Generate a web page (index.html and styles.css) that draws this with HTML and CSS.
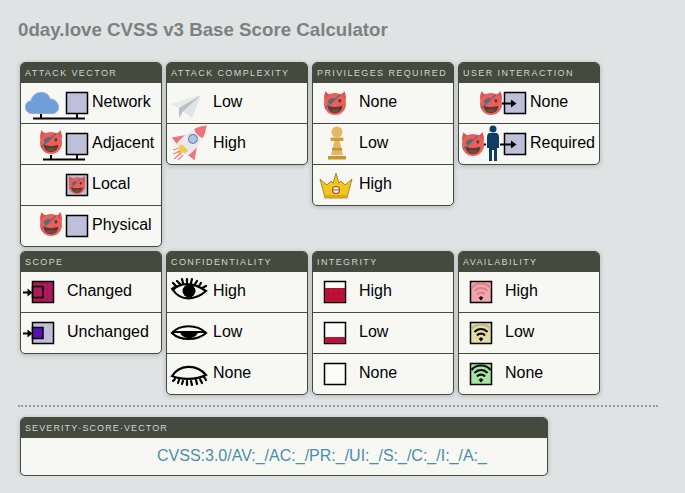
FILE: index.html
```html
<!DOCTYPE html>
<html lang="en">
<head>
<meta charset="utf-8">
<title>0day.love CVSS v3 Base Score Calculator</title>
<link rel="stylesheet" href="styles.css">
</head>
<body>
<svg class="defs" aria-hidden="true">
  <defs>
    <pattern id="dots" width="5" height="5" patternUnits="userSpaceOnUse">
      <circle cx="2" cy="2" r="0.700" fill="#5a0a30" opacity="0.6"/>
    </pattern>
    <symbol id="devil" viewBox="0 0 36 39">
      <path d="M1 17 C-1 9 1 4 3 0 C4 4 8 6 13 5Z M35 17 C37 9 35 4 33 0 C32 4 28 6 23 5Z" fill="#e0504e"/>
      <circle cx="18" cy="21" r="18" fill="#ea5f5c"/>
      <path d="M6 24 C6 24 12 26 18 26 C24 26 30 24 30 24 C30 31 24.500 36 18 36 C11.500 36 6 31 6 24Z" fill="#5e3a30"/>
      <path d="M10 31.500 C14 29 22 29 26 31.500 C23 35.500 13 35.500 10 31.500Z" fill="#7a4a3c"/>
      <ellipse cx="26" cy="16" rx="2.400" ry="3" fill="#5e3a30"/>
      <path d="M2 28 L26 6" stroke="#5b6a76" stroke-width="2"/>
      <path d="M6 17 C8 13 12 11 16 11 C18 14 16 19 11 20.500 C8 20.500 6 19 6 17Z" fill="#5b6a76"/>
    </symbol>
    <symbol id="wifi" viewBox="0 0 22 22">
      <path d="M8.500 16.500 H13.500 L11 19.500Z"/>
      <circle cx="11" cy="16.800" r="1.500"/>
    </symbol>
  </defs>
</svg>

<h1 class="title">0day.love CVSS v3 Base Score Calculator</h1>

<div class="grid">
  <section class="card">
    <h2 class="head">Attack Vector</h2>
    <div class="row">
      <svg class="ico wide" viewBox="1 0 71 40">
        <path class="cloud" d="M12 30.500 C7 30.500 5.500 26.500 5.500 24 C5.500 20 8 18 11 18 C12 13 16 9.500 21 9.500 C26 9.500 29 12 30 16 C35 16 38.500 20 38.500 24 C38.500 28 36 30.500 32 30.500Z"/>
        <rect class="box" x="46.500" y="9.500" width="21" height="21"/>
        <path class="net" d="M13 35.500H65M21 31V35M57 31V35"/>
      </svg>
      <span class="label">Network</span>
    </div>
    <div class="row">
      <svg class="ico wide" viewBox="1 0 71 40">
        <use href="#devil" x="20" y="6" width="22" height="24"/>
        <rect class="box" x="46.500" y="9.500" width="21" height="21"/>
        <path class="net" d="M23 35.500H65M31 31V35M57 31V35"/>
      </svg>
      <span class="label">Adjacent</span>
    </div>
    <div class="row">
      <svg class="ico wide" viewBox="1 0 71 40">
        <rect class="box" x="46.500" y="9.500" width="21" height="21"/>
        <use href="#devil" x="48.500" y="10.500" width="17" height="19"/>
      </svg>
      <span class="label">Local</span>
    </div>
    <div class="row">
      <svg class="ico wide" viewBox="1 0 71 40">
        <use href="#devil" x="20" y="6" width="22" height="24"/>
        <rect class="box" x="46.500" y="9.500" width="21" height="21"/>
      </svg>
      <span class="label">Physical</span>
    </div>
  </section>

  <section class="card">
    <h2 class="head">Attack Complexity</h2>
    <div class="row">
      <svg class="ico" viewBox="1 0 46 40">
        <path fill="#e6eaeb" d="M35 12 L3 21.500 L13 25Z"/>
        <path fill="#dfe4e6" d="M35 12 L17 28.500 L26 35Z"/>
        <path fill="#b9bfc3" d="M35 12 L13 25 L13 35 L17 28.500Z"/>
      </svg>
      <span class="label">Low</span>
    </div>
    <div class="row">
      <svg class="ico" viewBox="1 0 46 40">
        <g transform="translate(0 -1) rotate(45 23 20) translate(23 19) scale(1.150) translate(-23 -19)">
          <path fill="#f0737c" d="M16 17 L9 27 L16 28Z M30 17 L37 27 L30 28Z"/>
          <path fill="#e9e9ee" d="M16 29 C14 16 17 8 23 3 C29 8 32 16 30 29Z"/>
          <path fill="#f0737c" d="M17.500 8 C19 4 21 1 23 -2 C25 1 27 4 28.500 8 C25 10 21 10 17.500 8Z"/>
          <circle cx="23" cy="15" r="3.800" fill="#a7c6ea" stroke="#70809a"/>
          <rect x="19" y="25" width="8" height="4" fill="#f3c64e"/>
          <rect x="21" y="29" width="4" height="4" fill="#f3c64e"/>
        </g>
        <path stroke="#f0808a" stroke-width="1.300" d="M7 26 L13 24 M7 30 L14 27 M8 35 L15 29 M12 36 L17 31"/>
      </svg>
      <span class="label">High</span>
    </div>
  </section>

  <section class="card">
    <h2 class="head">Privileges Required</h2>
    <div class="row">
      <svg class="ico" viewBox="1 0 46 40">
        <use href="#devil" x="12" y="8" width="22" height="24"/>
      </svg>
      <span class="label">None</span>
    </div>
    <div class="row">
      <svg class="ico" viewBox="1 0 46 40">
        <circle cx="25" cy="8" r="5.500" fill="#e5b765"/>
        <rect x="18.500" y="13.500" width="13" height="3.500" rx="1" fill="#d39d30"/>
        <path fill="#e5b765" d="M22.500 17 H27.500 L31 31 H19Z"/>
        <rect x="20" y="24" width="10" height="2.500" fill="#c9962f"/>
        <rect x="16" y="32" width="18" height="3.500" fill="#c9962f"/>
      </svg>
      <span class="label">Low</span>
    </div>
    <div class="row">
      <svg class="ico" viewBox="1 0 46 40">
        <path fill="#f5c61a" stroke="#8a7330" stroke-width="0.800" d="M13 33 L8 14 L15 20 L19 16 L21 18 L24 8 L27 18 L29 16 L33 20 L40 14 L35 33Z"/>
        <rect x="13.500" y="30" width="21" height="2.500" fill="#d9a916"/>
        <circle cx="24" cy="25" r="3.500" fill="#f7f8f4" stroke="#a0522d" stroke-width="1.200"/>
        <path d="M20.500 25H27.500" stroke="#a0522d"/>
      </svg>
      <span class="label">High</span>
    </div>
  </section>

  <section class="card">
    <h2 class="head">User Interaction</h2>
    <div class="row">
      <svg class="ico wide" viewBox="1 0 71 40">
        <use href="#devil" x="22" y="8" width="22" height="24"/>
        <rect class="box" x="46.500" y="9.500" width="21" height="21"/>
        <path class="arrow" d="M44 20.500H54"/>
        <path d="M53 16.500 L58.500 20.500 L53 24.500Z"/>
      </svg>
      <span class="label">None</span>
    </div>
    <div class="row">
      <svg class="ico wide" viewBox="1 0 71 40">
        <use href="#devil" x="4" y="8" width="22" height="24"/>
        <rect class="box" x="46.500" y="9.500" width="21" height="21"/>
        <circle cx="35" cy="5" r="3.500" fill="#0f3c64"/>
        <path fill="#0f3c64" d="M31 9 H39 Q41 10 41 13 V24 H39 V37 H36 V26 H34 V37 H31 V24 H29 V13 Q29 10 31 9Z"/>
        <path class="arrow" d="M26 20.500H28M42 20.500H54"/>
        <path d="M53 16.500 L58.500 20.500 L53 24.500Z"/>
      </svg>
      <span class="label">Required</span>
    </div>
  </section>

  <section class="card">
    <h2 class="head">Scope</h2>
    <div class="row">
      <svg class="ico" viewBox="1 0 46 40">
        <rect class="box fill-red" x="12.500" y="9.500" width="21" height="21"/>
        <rect x="13" y="10" width="20" height="20" fill="url(#dots)"/>
        <rect class="inner" x="12.500" y="14.500" width="10.500" height="11"/>
        <path class="arrow" d="M3 20.500H9"/>
        <path d="M7.500 16.500 L12.500 20.500 L7.500 24.500Z"/>
      </svg>
      <span class="label">Changed</span>
    </div>
    <div class="row">
      <svg class="ico" viewBox="1 0 46 40">
        <rect class="box" x="12.500" y="9.500" width="21" height="21"/>
        <rect class="inner fill-purple" x="12.500" y="14.500" width="10.500" height="11"/>
        <path class="arrow" d="M3 20.500H9"/>
        <path d="M7.500 16.500 L12.500 20.500 L7.500 24.500Z"/>
      </svg>
      <span class="label">Unchanged</span>
    </div>
  </section>

  <section class="card">
    <h2 class="head">Confidentiality</h2>
    <div class="row">
      <svg class="ico" viewBox="1 0 46 40">
        <path class="lid" d="M7 18 C14 10 27 10 40 19 C30 28 15 30 7 18Z"/>
        <circle cx="23" cy="19" r="6.500"/>
        <path class="lid" d="M7 11 L10 14 M11 9 L14 12 M16 7 L17 11 M21 7 L21 11 M26 7 L25 11 M31 9 L29 12 M35 11 L33 14 M40 14 L36 16 M6 17 L9 15"/>
      </svg>
      <span class="label">High</span>
    </div>
    <div class="row">
      <svg class="ico" viewBox="1 0 46 40">
        <path class="lid" d="M6 20 C14 11 31 11 40 20 C31 28 14 28 6 20Z"/>
        <path d="M14 19 H32 C30 27 16 27 14 19Z"/>
        <path class="lid" d="M7 19 H39"/>
      </svg>
      <span class="label">Low</span>
    </div>
    <div class="row">
      <svg class="ico" viewBox="1 0 46 40">
        <path class="lid" d="M6 22 C13 11 30 9 40 21 C30 26 15 26 6 22Z"/>
        <path class="lid" d="M9 25 L7 27 M13 26 L12 29 M17 27 L16 30 M21 27 L21 31 M25 27 L26 31 M30 26 L31 30 M34 25 L36 29 M38 23 L40 26"/>
      </svg>
      <span class="label">None</span>
    </div>
  </section>

  <section class="card">
    <h2 class="head">Integrity</h2>
    <div class="row">
      <svg class="ico" viewBox="1 0 46 40">
        <rect class="box fill-white" x="12.500" y="9.500" width="21" height="21"/>
        <rect class="fill-crimson" x="13" y="16" width="20" height="14"/>
        <rect x="13" y="16" width="20" height="14" fill="url(#dots)"/>
      </svg>
      <span class="label">High</span>
    </div>
    <div class="row">
      <svg class="ico" viewBox="1 0 46 40">
        <rect class="box fill-white" x="12.500" y="9.500" width="21" height="21"/>
        <rect class="fill-crimson" x="13" y="24" width="20" height="6"/>
        <rect x="13" y="24" width="20" height="6" fill="url(#dots)"/>
      </svg>
      <span class="label">Low</span>
    </div>
    <div class="row">
      <svg class="ico" viewBox="1 0 46 40">
        <rect class="box fill-white" x="12.500" y="9.500" width="21" height="21"/>
      </svg>
      <span class="label">None</span>
    </div>
  </section>

  <section class="card">
    <h2 class="head">Availability</h2>
    <div class="row">
      <svg class="ico" viewBox="1 0 46 40">
        <rect class="box fill-pink" x="12.500" y="9.500" width="21" height="21"/>
        <path class="wave pale-red" d="M13.500 16 C18 10 28 10 32.500 16 M16.500 19 C20 15 26 15 29.500 19 M19 22.500 C21 20 25 20 27 22.500"/>
        <use href="#wifi" x="12" y="9" width="22" height="22"/>
      </svg>
      <span class="label">High</span>
    </div>
    <div class="row">
      <svg class="ico" viewBox="1 0 46 40">
        <rect class="box fill-sand" x="12.500" y="9.500" width="21" height="21"/>
        <path class="wave pale-sand" d="M13.500 16 C18 10 28 10 32.500 16"/>
        <path class="wave" d="M16.500 19 C20 15 26 15 29.500 19 M19 22.500 C21 20 25 20 27 22.500"/>
        <use href="#wifi" x="12" y="9" width="22" height="22"/>
      </svg>
      <span class="label">Low</span>
    </div>
    <div class="row">
      <svg class="ico" viewBox="1 0 46 40">
        <rect class="box fill-green" x="12.500" y="9.500" width="21" height="21"/>
        <path class="wave" d="M13.500 16 C18 10 28 10 32.500 16 M16.500 19 C20 15 26 15 29.500 19 M19 22.500 C21 20 25 20 27 22.500"/>
        <use href="#wifi" x="12" y="9" width="22" height="22"/>
      </svg>
      <span class="label">None</span>
    </div>
  </section>
</div>

<hr class="rule">

<section class="card score">
  <h2 class="head head-tight">Severity·Score·Vector</h2>
  <div class="vector">CVSS:3.0/AV:_/AC:_/PR:_/UI:_/S:_/C:_/I:_/A:_</div>
</section>
</body>
</html>
```
FILE: styles.css
```css
* { box-sizing: border-box; }

body {
  margin: 0;
  padding: 20px 18px 0;
  background: #dfe3e4;
  font-family: "Liberation Sans", Arial, sans-serif;
  color: #000;
}

.defs { display: block; width: 0; height: 0; }

.title {
  margin: 0 0 22px;
  font-size: 18.72px;
  line-height: 20px;
  font-weight: 700;
  color: #7f7f7f;
}

.grid {
  display: grid;
  grid-template-columns: repeat(4, 142px);
  gap: 4px;
  align-items: start;
  margin-left: 2px;
}

.card {
  background: #f7f8f4;
  border: 1px solid #444a3e;
  border-radius: 5px;
  box-shadow: 0 1px 5px rgba(0, 0, 0, 0.22);
  overflow: hidden;
}

.head {
  margin: 0;
  height: 20px;
  padding-left: 4px;
  background: #444a3e;
  color: #d3d6cf;
  font-size: 9px;
  font-weight: 400;
  line-height: 21px;
  letter-spacing: 1.4px;
  text-transform: uppercase;
  white-space: nowrap;
}

.head-tight { letter-spacing: 1.1px; }

.row {
  display: flex;
  align-items: flex-start;
  height: 41px;
  border-bottom: 1px solid #444a3e;
}

.row:last-child { height: 40px; border-bottom: 0; }

.ico { display: block; flex: none; width: 46px; height: 40px; }
.ico.wide { width: 71px; }

.label {
  font-size: 16px;
  line-height: 38px;
  white-space: nowrap;
}

.box { fill: #bebfd9; stroke: #000; stroke-width: 1.5; }
.inner { fill: none; stroke: #000; stroke-width: 1.5; }
.net { fill: none; stroke: #000; stroke-width: 2; }
.arrow { fill: none; stroke: #000; stroke-width: 2; }
.cloud { fill: #6f9ed8; stroke: #8ea9dc; stroke-width: 1; }
.lid { fill: none; stroke: #000; stroke-width: 2.200; stroke-linecap: round; }
.wave { fill: none; stroke: #111; stroke-width: 2.200; }

.box.fill-red { fill: #b01a5c; }
.fill-crimson { fill: #bd1238; }
.inner.fill-purple { fill: #5a10b4; }
.box.fill-white { fill: #fbfbf9; }
.box.fill-pink { fill: #f4a4ac; }
.box.fill-sand { fill: #e3dca8; }
.box.fill-green { fill: #a6e3a4; }
.pale-red { stroke: #d8848e; }
.pale-sand { stroke: #bdb68c; }

.rule {
  margin: 10px 9px 10px 0;
  border: 0;
  border-top: 2px dotted #9a9a9a;
}

.score { width: 528px; margin-left: 2px; }

.vector {
  height: 37px;
  padding-left: 136px;
  font-size: 16px;
  line-height: 35px;
  color: #4a8fa8;
  white-space: nowrap;
}
```
